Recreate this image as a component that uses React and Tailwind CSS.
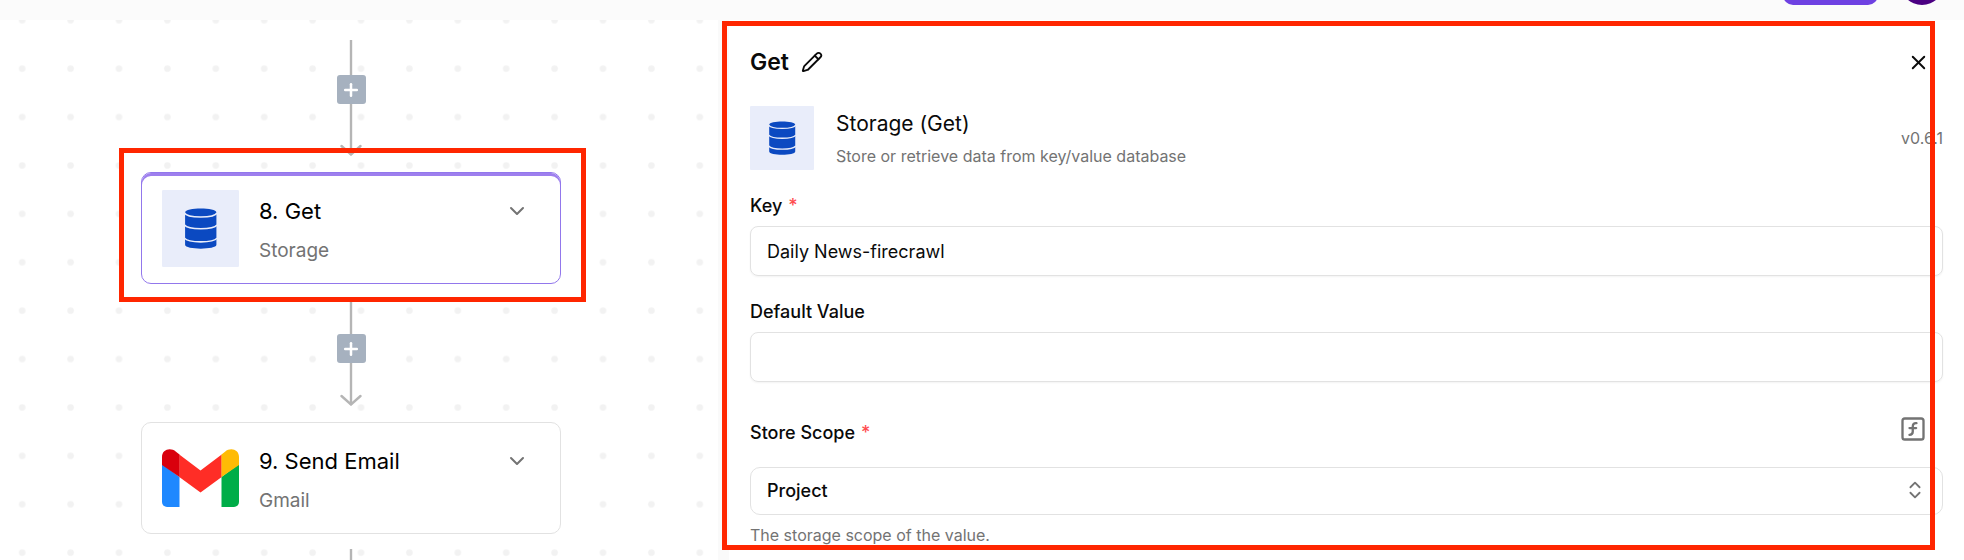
import { useState } from 'react';
import { ChevronDown, ChevronsUpDown, Pencil, Plus, SquareFunction, X } from 'lucide-react';

const SCOPES = ['Project', 'Flow', 'Run'];

function StorageIcon({ className }) {
  return (
    <svg viewBox="0 0 60 60" className={className} aria-hidden="true">
      <rect width="60" height="60" rx="1" fill="#e9edfa" />
      <path d="M18 17.500c0-4 24.400-4 24.400 0v25.200c0 4-24.400 4-24.400 0z" fill="#0b49c1" />
      <g fill="none" stroke="#e9edfa" strokeWidth="1.200">
        <path d="M17.500 17.800c2 4.300 23.400 4.300 25.400 0" />
        <path d="M17.500 27.300c3 3.900 22.400 3.900 25.400 0" />
        <path d="M17.500 37.500c3 3.900 22.400 3.900 25.400 0" />
      </g>
    </svg>
  );
}

function GmailIcon({ className }) {
  return (
    <svg viewBox="0 1 77 77" className={className} aria-hidden="true">
      <path d="M0 25v38a5 5 0 0 0 5 5h12.500V38z" fill="#1e88ff" />
      <path d="M77 25v38a5 5 0 0 1-5 5H59.500V38z" fill="#00ad48" />
      <path d="M17.300 38V15.500l21.200 16 21.200-16V38L38.500 53.500z" fill="#ff2d26" />
      <path d="M0 26v-8C0 10.500 8.500 8 14 12.800l3.500 2.800V38z" fill="#d9000d" />
      <path d="M77 26v-8c0-7.500-8.500-10-14-5.200l-3.500 2.800V38z" fill="#ffbb05" />
    </svg>
  );
}

function CanvasDots() {
  return (
    <svg className="absolute inset-0 h-full w-full" aria-hidden="true">
      <defs>
        <pattern id="dots" width="48.4" height="48.4" x="-2" y="-24" patternUnits="userSpaceOnUse">
          <circle cx="24.2" cy="24.2" r="3.300" fill="#f2f2f2" />
        </pattern>
      </defs>
      <rect width="100%" height="100%" fill="url(#dots)" />
    </svg>
  );
}

// Connector between two steps, with the "add step" button on top of the line
function Edge({ length }) {
  return (
    <div className="relative mt-[15px] mb-4 flex justify-center">
      <svg width="24" height={length} fill="none" stroke="#b5b5b5" strokeWidth="2.400" aria-hidden="true">
        <path d={`M12 0V${length - 1}`} />
        <path d={`M2.500 ${length - 10}L12 ${length - 1.5}l9.500-8.500`} strokeLinecap="round" />
      </svg>
      <button
        aria-label="Add step"
        className="absolute top-[35px] flex size-[29px] items-center justify-center rounded-[3px] bg-[#a6b1bf] text-white"
      >
        <Plus className="size-5" strokeWidth={3} />
      </button>
    </div>
  );
}

function StepCard({ icon, title, piece, selected }) {
  return (
    <div
      className={`flex h-[112px] items-center rounded-[10px] border bg-white pr-[31px] pl-5 ${
        selected ? 'border-[#9277ec] shadow-[inset_0_3px_0_#9e7fee]' : 'border-[#e2e2e2]'
      }`}
    >
      {icon}
      <div className="ml-5 flex-1 pt-[6px]">
        <div className="flex items-center justify-between">
          <h3 className="text-[22px] leading-8 text-black">{title}</h3>
          <button aria-label="Step options" className="text-[#737373]">
            <ChevronDown className="size-6" />
          </button>
        </div>
        <p className="mt-2 text-[19px] leading-8 text-[#737373]">{piece}</p>
      </div>
    </div>
  );
}

function Required() {
  return <span className="ml-[6px] text-[#ff4d4f]">*</span>;
}

export default function App() {
  const [key, setKey] = useState('Daily News-firecrawl');
  const [defaultValue, setDefaultValue] = useState('');
  const [scope, setScope] = useState('Project');

  return (
    <div className="flex h-screen flex-col overflow-hidden bg-white font-['Inter','Liberation_Sans',sans-serif] text-[#0a0a0a]">
      {/* Header */}
      <header className="flex h-5 shrink-0 items-end justify-end gap-[22px] overflow-hidden bg-[#fbfbfb] pr-5 pb-[15px]">
        <button aria-label="Publish" className="h-11 w-[95px] shrink-0 rounded-[10px] bg-[#6e41e2]" />
        <button aria-label="Account" className="size-11 shrink-0 rounded-full bg-[#4b0082]" />
      </header>

      <div className="flex min-h-0 flex-1">
        {/* Flow canvas */}
        <main className="relative w-[718px] shrink-0 overflow-hidden">
          <CanvasDots />
          <div className="relative ml-[141px] w-[420px] pt-[5px]">
            <Edge length={116} />
            <div className="relative z-10">
              <StepCard
                selected
                title="8. Get"
                piece="Storage"
                icon={<StorageIcon className="size-[77px]" />}
              />
              <div className="pointer-events-none absolute -top-6 -right-[25px] -bottom-[18px] -left-[22px] border-5 border-[#ff2600]" />
            </div>
            <Edge length={107} />
            <StepCard title="9. Send Email" piece="Gmail" icon={<GmailIcon className="size-[77px]" />} />
            <Edge length={107} />
          </div>
        </main>

        <div className="w-[11px] shrink-0 bg-[#fafafa]" />

        {/* Step settings */}
        <aside className="relative min-w-0 flex-1 px-[21px] pt-6">
          <div className="flex items-center justify-between pr-[13px]">
            <div className="flex items-center gap-3">
              <h2 className="text-[23px] leading-9 font-semibold">Get</h2>
              <button aria-label="Rename step">
                <Pencil className="size-[22px]" />
              </button>
            </div>
            <button aria-label="Close">
              <X className="size-[23px]" />
            </button>
          </div>

          <div className="mt-[26px] flex items-center">
            <StorageIcon className="size-16" />
            <div className="ml-[22px] flex-1 pt-1">
              <p className="text-[21px] leading-7">Storage (Get)</p>
              <p className="mt-1 text-base leading-7 text-[#737373]">
                Store or retrieve data from key/value database
              </p>
            </div>
            <span className="text-base text-[#737373]">v0.6.1</span>
          </div>

          <label htmlFor="key" className="mt-5 block text-lg leading-8 font-medium">
            Key
            <Required />
          </label>
          <input
            id="key"
            value={key}
            onChange={(e) => setKey(e.target.value)}
            className="mt-1 block h-[50px] w-full rounded-lg border border-[#e2e2e2] px-4 text-lg shadow-xs"
          />

          <label htmlFor="default-value" className="mt-5 block text-lg leading-8 font-medium">
            Default Value
          </label>
          <input
            id="default-value"
            value={defaultValue}
            onChange={(e) => setDefaultValue(e.target.value)}
            className="mt-1 block h-[50px] w-full rounded-lg border border-[#e2e2e2] px-4 text-lg shadow-xs"
          />

          <div className="mt-[33px] flex items-start justify-between pr-4">
            <label htmlFor="scope" className="pt-[2px] text-lg leading-8 font-medium">
              Store Scope
              <Required />
            </label>
            <button aria-label="Dynamic value" className="text-[#737373]">
              <SquareFunction className="size-7" strokeWidth={2} />
            </button>
          </div>
          <div className="relative mt-[18px]">
            <select
              id="scope"
              value={scope}
              onChange={(e) => setScope(e.target.value)}
              className="block h-12 w-full appearance-none rounded-[10px] border border-[#e2e2e2] bg-white px-4 text-lg font-medium"
            >
              {SCOPES.map((name) => (
                <option key={name}>{name}</option>
              ))}
            </select>
            <ChevronsUpDown className="pointer-events-none absolute top-3 right-[17px] size-[22px] text-[#737373]" />
          </div>
          <p className="mt-1 text-base leading-8 text-[#737373]">The storage scope of the value.</p>

          <div className="pointer-events-none absolute top-px right-[29px] bottom-[10px] -left-[7px] border-5 border-[#ff2600]" />
        </aside>
      </div>
    </div>
  );
}
